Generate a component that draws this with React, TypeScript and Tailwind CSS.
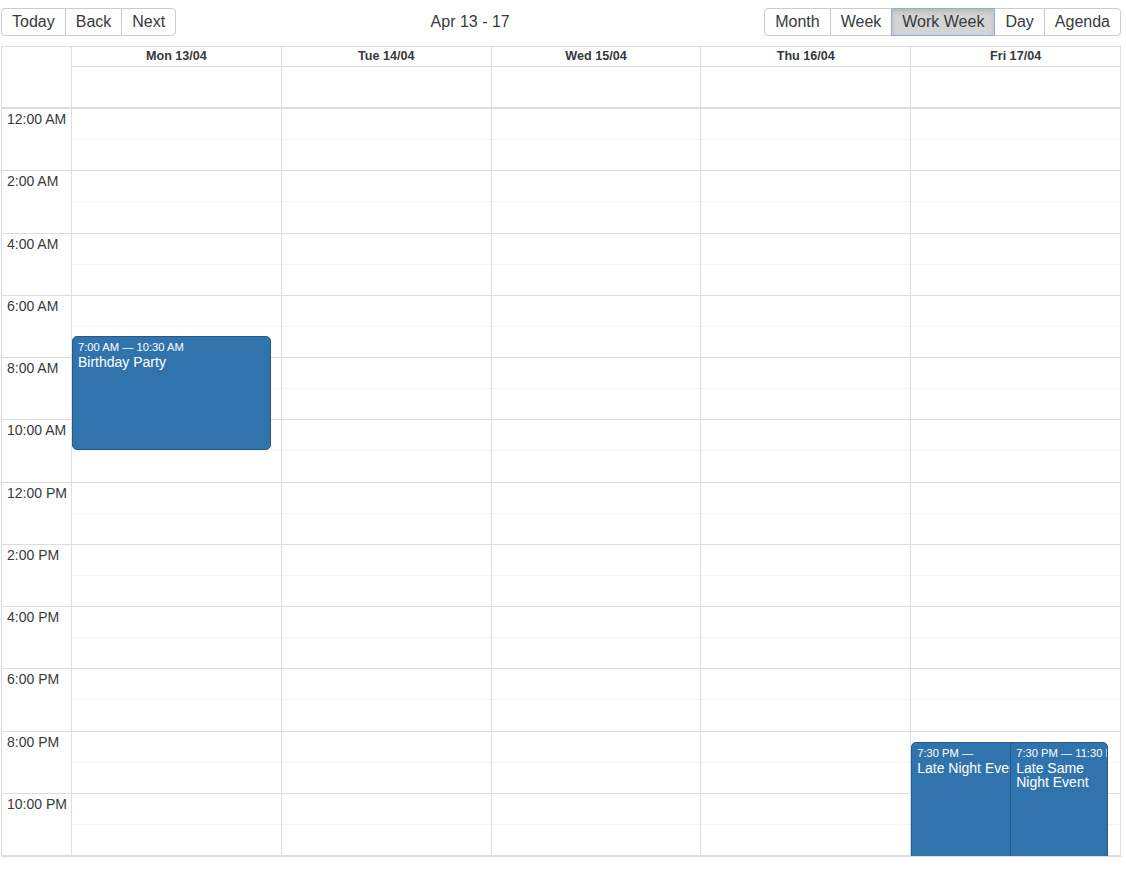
import React from "react";

const days = ["Mon 13/04", "Tue 14/04", "Wed 15/04", "Thu 16/04", "Fri 17/04"];
const hours = [
  "12:00 AM",
  "2:00 AM",
  "4:00 AM",
  "6:00 AM",
  "8:00 AM",
  "10:00 AM",
  "12:00 PM",
  "2:00 PM",
  "4:00 PM",
  "6:00 PM",
  "8:00 PM",
  "10:00 PM",
];

const font = { fontFamily: '"Liberation Sans", Arial, sans-serif' };

function Btn({
  children,
  first,
  last,
  active,
}: {
  children: React.ReactNode;
  first?: boolean;
  last?: boolean;
  active?: boolean;
}) {
  return (
    <button
      className={
        "h-[28px] px-[10px] text-[16px] leading-none border " +
        (first ? "rounded-l-[4px] " : "-ml-px ") +
        (last ? "rounded-r-[4px] " : "") +
        (active
          ? "relative z-10 bg-[#d4d4d4] border-[#8eaee0] text-[#373a3c] shadow-[inset_0_3px_5px_rgba(0,0,0,0.125)]"
          : "bg-white border-[#cccccc] text-[#373a3c]")
      }
    >
      {children}
    </button>
  );
}

function Event({
  label,
  title,
  className,
  nowrapTitle,
}: {
  label: string;
  title: string;
  className: string;
  nowrapTitle?: boolean;
}) {
  return (
    <div
      className={
        "absolute overflow-hidden bg-[#3174ad] border border-[#265985] text-white px-[5px] pt-[4px] " +
        className
      }
    >
      <div className="text-[11.2px] leading-[13px] whitespace-nowrap">{label}</div>
      <div className={"text-[14px] leading-[14px] mt-[1px] " + (nowrapTitle ? "whitespace-nowrap" : "")}>
        {title}
      </div>
    </div>
  );
}

export default function App() {
  return (
    <div className="bg-white w-[1126px] h-[869px] pt-[8px]" style={font}>
      {/* toolbar */}
      <div className="flex items-center ml-[1px] w-[1120px] mb-[10px]">
        <div className="flex">
          <Btn first>Today</Btn>
          <Btn>Back</Btn>
          <Btn last>Next</Btn>
        </div>
        <div className="flex-1 text-center text-[16px] text-[#373a3c]">Apr 13 - 17</div>
        <div className="flex">
          <Btn first>Month</Btn>
          <Btn>Week</Btn>
          <Btn active>Work Week</Btn>
          <Btn>Day</Btn>
          <Btn last>Agenda</Btn>
        </div>
      </div>

      {/* calendar */}
      <div className="ml-[1px] w-[1120px] border border-[#dddddd] flex flex-col">
        {/* header */}
        <div className="flex border-b-2 border-[#dddddd]">
          <div className="w-[70px] shrink-0 border-r border-[#dddddd]" />
          <div className="flex flex-1">
            {days.map((d, i) => (
              <div
                key={d}
                className={"flex-1 flex flex-col " + (i > 0 ? "border-l border-[#dddddd]" : "")}
              >
                <div className="h-[20px] border-b border-[#dddddd] text-center text-[12.6px] font-bold text-[#373a3c] leading-[19px]">
                  {d}
                </div>
                <div className="h-[40px]" />
              </div>
            ))}
          </div>
        </div>

        {/* time grid */}
        <div className="flex h-[747px] overflow-hidden">
          <div className="w-[70px] shrink-0 border-r border-[#dddddd] flex flex-col">
            {hours.map((h) => (
              <div
                key={h}
                className="flex-1 border-b border-[#dddddd] px-[5px] text-[14px] text-[#373a3c] leading-[20px] whitespace-nowrap"
              >
                {h}
              </div>
            ))}
          </div>
          <div className="flex flex-1">
            {days.map((d, i) => (
              <div
                key={d}
                className={
                  "relative flex-1 flex flex-col " + (i > 0 ? "border-l border-[#dddddd]" : "")
                }
              >
                {hours.map((h) => (
                  <div key={h} className="flex-1 flex flex-col border-b border-[#dddddd]">
                    <div className="flex-1" />
                    <div className="flex-1 border-t border-[#f5f5f5]" />
                  </div>
                ))}
                {i === 0 && (
                  <Event
                    label="7:00 AM — 10:30 AM"
                    title="Birthday Party"
                    className="left-0 top-[227px] w-[199px] h-[114px] rounded-[5px]"
                  />
                )}
                {i === 4 && (
                  <>
                    <Event
                      label="7:30 PM —"
                      title="Late Night Event"
                      nowrapTitle
                      className="left-0 top-[633px] w-[190px] h-[140px] rounded-[5px]"
                    />
                    <Event
                      label="7:30 PM — 11:30 PM"
                      title="Late Same Night Event"
                      className="z-10 left-[99px] top-[633px] w-[98px] h-[140px] rounded-[5px]"
                    />
                  </>
                )}
              </div>
            ))}
          </div>
        </div>
      </div>
    </div>
  );
}
